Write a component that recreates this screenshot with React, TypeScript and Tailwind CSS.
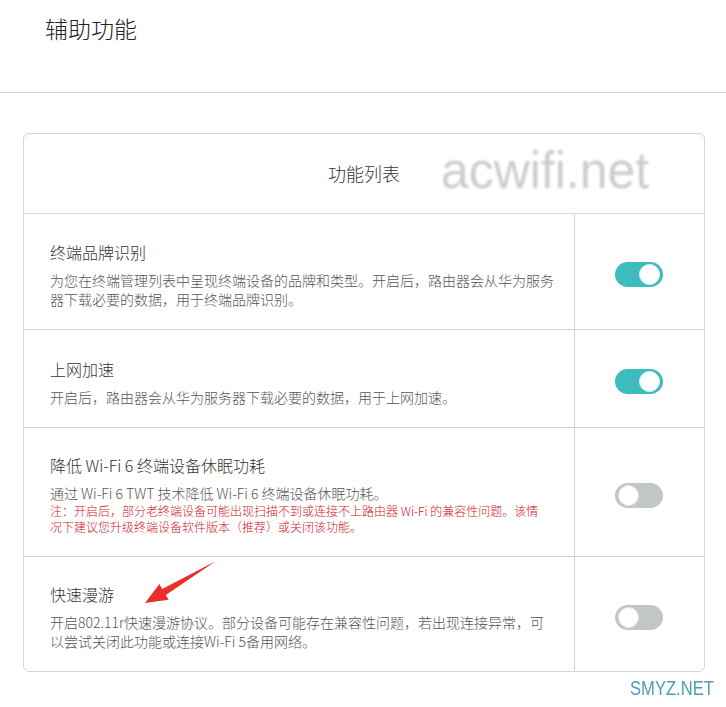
import React from "react";

const cjk = { fontFamily: '"Noto Sans CJK SC", "Noto Sans", sans-serif' };

function Toggle({ on }: { on: boolean }) {
  return (
    <div
      className={
        "relative h-[25px] w-[48px] rounded-full " + (on ? "bg-[#3cbcbf]" : "bg-[#c3c6c6]")
      }
    >
      <div
        className={
          "absolute top-[2px] h-[21px] w-[21px] rounded-full bg-white " +
          (on ? "right-[3px] border border-[#e4f4f4]" : "left-[3px] border border-[#e6e6e6]")
        }
      />
    </div>
  );
}

type Row = { title: string; lines: string[]; note?: string[]; on: boolean; h: string; pt: string };

const rows: Row[] = [
  {
    title: "终端品牌识别",
    lines: [
      "为您在终端管理列表中呈现终端设备的品牌和类型。开启后，路由器会从华为服务",
      "器下载必要的数据，用于终端品牌识别。",
    ],
    on: true,
    h: "h-[116px]",
    pt: "pt-[27px]",
  },
  {
    title: "上网加速",
    lines: ["开启后，路由器会从华为服务器下载必要的数据，用于上网加速。"],
    on: true,
    h: "h-[98px]",
    pt: "pt-[28px]",
  },
  {
    title: "降低 Wi-Fi 6 终端设备休眠功耗",
    lines: ["通过 Wi-Fi 6 TWT 技术降低 Wi-Fi 6 终端设备休眠功耗。"],
    note: [
      "注：开启后，部分老终端设备可能出现扫描不到或连接不上路由器 Wi-Fi 的兼容性问题。该情",
      "况下建议您升级终端设备软件版本（推荐）或关闭该功能。",
    ],
    on: false,
    h: "h-[129px]",
    pt: "pt-[26px]",
  },
  {
    title: "快速漫游",
    lines: [
      "开启802.11r快速漫游协议。部分设备可能存在兼容性问题，若出现连接异常，可",
      "以尝试关闭此功能或连接Wi-Fi 5备用网络。",
    ],
    on: false,
    h: "h-[114px]",
    pt: "pt-[26px]",
  },
];

export default function App() {
  return (
    <div className="relative h-[707px] w-[726px] overflow-hidden bg-white font-light" style={cjk}>
      <div className="h-[93px] border-b border-[#d2d2d2] pl-[45px] pt-[12px]">
        <h1 className="text-[23px] leading-[32px] text-[#222]">辅助功能</h1>
      </div>

      <div className="mx-[21px] ml-[23px] mt-[40px] overflow-hidden rounded-[6px] border border-[#d5d5d5]">
        <div className="relative flex h-[80px] items-center justify-center border-b border-[#dadada]">
          <span className="text-[18px] text-[#333]">功能列表</span>
          <span
            className="absolute left-[417px] top-[6px] origin-left scale-x-[0.96] text-[52px] leading-[60px] text-[#cdcdcd] blur-[1px]"
            style={{ fontFamily: '"Liberation Sans", Arial, sans-serif' }}
          >
            acwifi.net
          </span>
        </div>

        {rows.map((r, i) => (
          <div
            key={r.title}
            className={
              "grid grid-cols-[551px_1fr] " + r.h + (i < rows.length - 1 ? " border-b border-[#d2d2d2]" : "")
            }
          >
            <div className={"border-r border-[#d2d2d2] pl-[26px] " + r.pt}>
              <div className="text-[16px] leading-[22px] text-[#333]">{r.title}</div>
              <div className="mt-[8px] text-[14px] leading-[19px] text-[#555]">
                {r.lines.map((l) => (
                  <div key={l} className="whitespace-nowrap">
                    {l}
                  </div>
                ))}
              </div>
              {r.note && (
                <div className="text-[12px] leading-[16px] text-[#d0161f]">
                  {r.note.map((l) => (
                    <div key={l} className="whitespace-nowrap">
                      {l}
                    </div>
                  ))}
                </div>
              )}
            </div>
            <div className="flex items-center justify-center pt-[6px] pr-[1px]">
              <Toggle on={r.on} />
            </div>
          </div>
        ))}
      </div>

      <svg className="absolute left-[140px] top-[558px]" width="80" height="50" viewBox="0 0 80 50">
        <polygon
          points="5,45 28.6,41.7 25.8,36.9 76,3 22.2,30.9 19.4,26.1"
          fill="#ea2e2a"
        />
      </svg>

      <div
        className="absolute left-[630px] top-[676px] origin-left scale-x-[0.79] text-[21px] leading-[24px] text-[#4aa0ae]"
        style={{ fontFamily: '"Liberation Sans", Arial, sans-serif' }}
      >
        SMYZ.NET
      </div>
    </div>
  );
}
